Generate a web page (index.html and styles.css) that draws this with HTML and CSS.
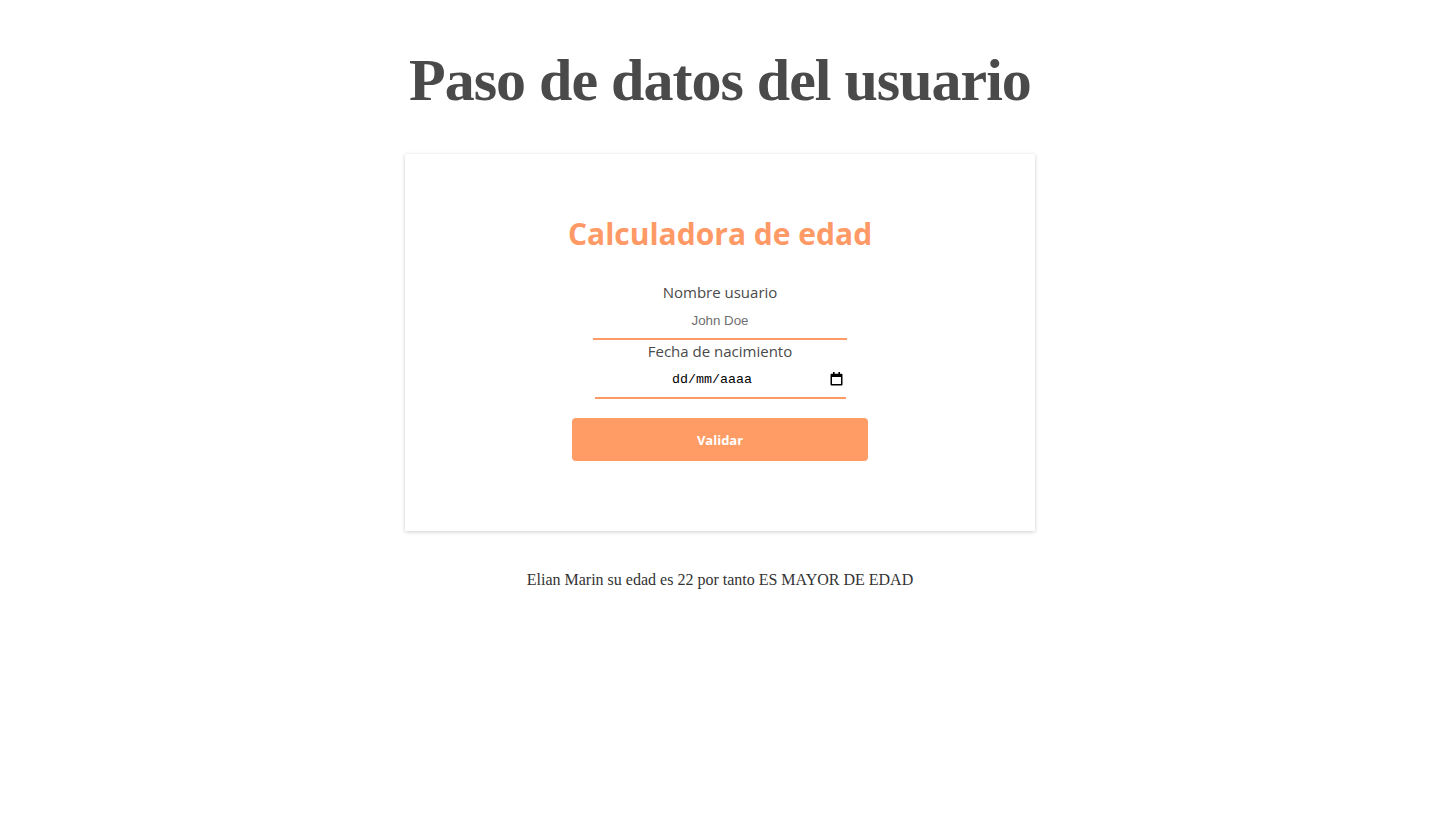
FILE: index.html
```html
<!DOCTYPE html>
<html lang="es">
<head>
<meta charset="utf-8">
<title>Paso de datos del usuario</title>
<link rel="stylesheet" href="styles.css">
</head>
<body>
<main class="page">
  <h1 class="title">Paso de datos del usuario</h1>
  <section class="card">
    <h2 class="card-title">Calculadora de edad</h2>
    <form class="form">
      <label class="label" for="nombre">Nombre usuario</label>
      <input class="input" id="nombre" type="text" placeholder="John Doe">
      <label class="label" for="fecha">Fecha de nacimiento</label>
      <div class="date-field">
        <input class="input input-date" id="fecha" type="text" placeholder="dd/mm/aaaa">
        <svg class="date-icon" width="13" height="14" viewBox="0 0 13 14" aria-hidden="true">
          <rect x="3" y="0" width="1.6" height="3" fill="#000"/>
          <rect x="8.4" y="0" width="1.6" height="3" fill="#000"/>
          <path d="M1.5 1.8h10a1 1 0 0 1 1 1v9.7a1 1 0 0 1-1 1h-10a1 1 0 0 1-1-1V2.8a1 1 0 0 1 1-1z" fill="#000"/>
          <rect x="2" y="5" width="9" height="7" fill="#fff"/>
        </svg>
      </div>
      <button class="button" type="button">Validar</button>
    </form>
  </section>
  <p class="result">Elian Marin su edad es 22 por tanto ES MAYOR DE EDAD</p>
</main>
</body>
</html>
```
FILE: styles.css
```css
* { box-sizing: border-box; }
body {
  margin: 0;
  background: #fff;
  font-family: "Liberation Serif", "Times New Roman", serif;
  color: #4a4a4a;
}
.page {
  display: flex;
  flex-direction: column;
  align-items: center;
  padding-top: 46px;
}
.title {
  margin: 0;
  font-size: 60px;
  line-height: 68px;
  letter-spacing: -1px;
  font-weight: bold;
  color: #4a4a4a;
}
.card {
  margin-top: 40px;
  width: 630px;
  height: 377px;
  background: #fff;
  box-shadow: 0 1px 4px rgba(0,0,0,0.2);
  display: flex;
  flex-direction: column;
  align-items: center;
  padding-top: 60px;
  font-family: "Open Sans", "Noto Sans", sans-serif;
}
.card-title {
  margin: 0;
  font-size: 30px;
  line-height: 40px;
  font-weight: 700;
  color: #ff9966;
}
.form {
  margin-top: 27px;
  display: flex;
  flex-direction: column;
  align-items: center;
}
.label {
  font-size: 15px;
  line-height: 22px;
  color: #4a4a4a;
}
.input {
  width: 254px;
  height: 37px;
  padding: 0;
  border: none;
  border-bottom: 2px solid #ff9966;
  outline: none;
  text-align: center;
  font-family: "Liberation Sans", Arial, sans-serif;
  font-size: 13.33px;
  color: #333;
  background: transparent;
}
.input::placeholder { color: #6f6f6f; }
.date-field {
  position: relative;
}
.input-date {
  width: 251px;
  padding-right: 16px;
  font-family: "Liberation Mono", monospace;
  color: #000;
}
.input-date::placeholder { color: #000; }
.date-icon {
  position: absolute;
  right: 3px;
  top: 10px;
}
.button {
  margin-top: 19px;
  width: 296px;
  height: 43px;
  border: none;
  border-radius: 4px;
  background: #ff9c66;
  color: #fff;
  font-family: "Open Sans", "Noto Sans", sans-serif;
  font-weight: 700;
  font-size: 13px;
}
.result {
  margin: 40px 0 0;
  font-size: 16px;
  color: #333;
}
```
